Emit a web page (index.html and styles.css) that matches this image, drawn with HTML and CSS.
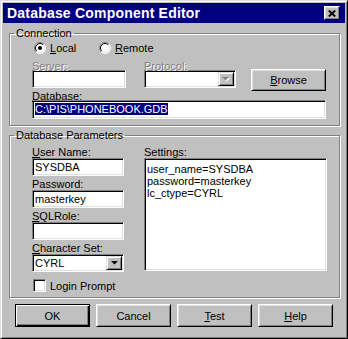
FILE: index.html
```html
<!DOCTYPE html>
<html lang="en">
<head>
    <meta charset="UTF-8">
    <title>Database Component Editor</title>
    <link rel="stylesheet" href="styles.css">
</head>
<body>

<div class="window">
    <div class="titlebar">
        <span class="title">Database Component Editor</span>
        <span class="close-btn">
            <svg width="8" height="7" viewBox="0 0 8 7"><path d="M0.8 0.5 L7.2 6.5 M7.2 0.5 L0.8 6.5" stroke="#000" stroke-width="1.9" fill="none"/></svg>
        </span>
    </div>

    <div class="content">
        <fieldset class="group conn">
            <legend>Connection</legend>
            <div class="group-body">
                <div class="radios">
                    <label class="radio local">
                        <svg class="radio-box" width="12" height="12" viewBox="0 0 12 12">
                            <circle cx="6" cy="6" r="5.5" fill="#fff"/>
                            <path d="M9.9 2.1 A5.5 5.5 0 0 0 2.1 9.9" stroke="#808080" fill="none"/>
                            <path d="M2.1 9.9 A5.5 5.5 0 0 0 9.9 2.1" stroke="#fff" fill="none"/>
                            <path d="M9.2 2.8 A4.5 4.5 0 0 0 2.8 9.2" stroke="#000" fill="none"/>
                            <path d="M2.8 9.2 A4.5 4.5 0 0 0 9.2 2.8" stroke="#dfdfdf" fill="none"/>
                            <circle cx="6" cy="6" r="2" fill="#000"/>
                        </svg>
                        <span><u>L</u>ocal</span>
                    </label>
                    <label class="radio">
                        <svg class="radio-box" width="12" height="12" viewBox="0 0 12 12">
                            <circle cx="6" cy="6" r="5.5" fill="#fff"/>
                            <path d="M9.9 2.1 A5.5 5.5 0 0 0 2.1 9.9" stroke="#808080" fill="none"/>
                            <path d="M2.1 9.9 A5.5 5.5 0 0 0 9.9 2.1" stroke="#fff" fill="none"/>
                            <path d="M9.2 2.8 A4.5 4.5 0 0 0 2.8 9.2" stroke="#000" fill="none"/>
                            <path d="M2.8 9.2 A4.5 4.5 0 0 0 9.2 2.8" stroke="#dfdfdf" fill="none"/>
                        </svg>
                        <span><u>R</u>emote</span>
                    </label>
                </div>

                <div class="row">
                    <div class="server">
                        <div class="lbl disabled">Server:</div>
                        <div class="edit"></div>
                    </div>
                    <div class="protocol">
                        <div class="lbl disabled">Protocol:</div>
                        <div class="edit combo">
                            <span class="drop">
                                <svg width="8" height="5" viewBox="0 0 8 5"><polygon points="1,1 8,1 4.5,4.5" fill="#fff"/><polygon points="0,0 7,0 3.5,3.5" fill="#808080"/></svg>
                            </span>
                        </div>
                    </div>
                    <button class="btn browse"><u>B</u>rowse</button>
                </div>

                <div class="db-field">
                    <div class="lbl"><u>D</u>atabase:</div>
                    <div class="edit db"><span class="sel">C:\PIS\PHONEBOOK.GDB</span></div>
                </div>
            </div>
        </fieldset>

        <fieldset class="group params">
            <legend>Database Parameters</legend>
            <div class="group-body">
                <div class="cols">
                    <div class="left">
                        <div class="lbl first"><u>U</u>ser Name:</div>
                        <div class="edit">SYSDBA</div>
                        <div class="lbl">Password:</div>
                        <div class="edit">masterkey</div>
                        <div class="lbl"><u>S</u>QLRole:</div>
                        <div class="edit"></div>
                        <div class="lbl"><u>C</u>haracter Set:</div>
                        <div class="edit combo">
                            <span class="combo-text">CYRL</span>
                            <span class="drop">
                                <svg width="7" height="4" viewBox="0 0 7 4"><polygon points="0,0 7,0 3.5,3.5" fill="#000"/></svg>
                            </span>
                        </div>
                        <label class="check-row">
                            <span class="check"></span>
                            <span>Login Prompt</span>
                        </label>
                    </div>
                    <div class="right">
                        <div class="lbl first">Settings:</div>
                        <div class="memo">user_name=SYSDBA<br>password=masterkey<br>lc_ctype=CYRL</div>
                    </div>
                </div>
            </div>
        </fieldset>

        <div class="buttons">
            <button class="btn default">OK</button>
            <button class="btn">Cancel</button>
            <button class="btn"><u>T</u>est</button>
            <button class="btn"><u>H</u>elp</button>
        </div>
    </div>
</div>

</body>
</html>
```

FILE: styles.css
```css
body {
    margin: 0;
    font-family: "Liberation Sans", Arial, sans-serif;
    font-size: 11px;
    color: #000;
    background: #c0c0c0;
}
.window {
    width: 348px;
    height: 339px;
    box-sizing: border-box;
    background: #c0c0c0;
    border: 1px solid;
    border-color: #dfdfdf #000 #000 #dfdfdf;
    box-shadow: inset 1px 1px #fff, inset -1px -1px #808080;
    padding: 2px;
}
.titlebar {
    height: 20px;
    background: #000080;
    color: #fff;
    display: flex;
    align-items: center;
    justify-content: space-between;
    padding: 0 5px 0 4px;
}
.title {
    font-weight: bold;
    font-size: 14px;
    letter-spacing: 0.2px;
    line-height: 20px;
}
.close-btn {
    width: 16px;
    height: 14px;
    box-sizing: border-box;
    background: #c0c0c0;
    border: 1px solid;
    border-color: #fff #000 #000 #fff;
    box-shadow: inset -1px -1px #808080, inset 1px 1px #dfdfdf;
    display: flex;
    align-items: center;
    justify-content: center;
}
.content {
    padding: 4px 0 0 6px;
}
.group {
    margin: 0;
    padding: 0;
    width: 331px;
    min-width: 0;
    box-sizing: border-box;
    border: 1px solid #808080;
    box-shadow: inset 1px 1px #fff, 1px 1px #fff;
}
.group legend {
    margin-left: 4px;
    padding: 0 2px;
    line-height: 12px;
}
.group-body {
    padding: 0 0 6px 22px;
}
.params {
    margin-top: 3px;
}
.params .group-body {
    padding-bottom: 5px;
}

/* radios */
.radios {
    display: flex;
    align-items: center;
    height: 12px;
    margin: 3px 0 0 2px;
}
.radio {
    display: flex;
    align-items: center;
    gap: 4px;
}
.radio.local {
    width: 65px;
}
.radio-box {
    display: block;
}

/* labels and fields */
.lbl {
    display: block;
    height: 8px;
    line-height: 8px;
    white-space: nowrap;
}
.lbl.disabled {
    color: #808080;
    text-shadow: 1px 1px #fff;
}
.edit {
    height: 18px;
    box-sizing: border-box;
    background: #fff;
    border: 1px solid;
    border-color: #808080 #fff #fff #808080;
    box-shadow: inset 1px 1px #000, inset -1px -1px #dfdfdf;
    padding: 1px 1px 1px 2px;
    line-height: 14px;
    white-space: nowrap;
}
.combo {
    display: flex;
    justify-content: space-between;
    padding: 1px;
}
.combo-text {
    padding-left: 1px;
}
.drop {
    width: 16px;
    height: 14px;
    box-sizing: border-box;
    background: #c0c0c0;
    border: 1px solid;
    border-color: #dfdfdf #000 #000 #dfdfdf;
    box-shadow: inset 1px 1px #fff, inset -1px -1px #808080;
    display: flex;
    align-items: center;
    justify-content: center;
    margin-left: auto;
}
.drop svg {
    display: block;
}

.row {
    display: flex;
    align-items: flex-start;
    margin-top: 8px;
}
.server {
    width: 94px;
}
.protocol {
    width: 92px;
    margin-left: 18px;
}
.db-field {
    margin-top: 1px;
}
.db {
    width: 294px;
    height: 19px;
    padding: 1px 1px 1px 2px;
    line-height: 15px;
}
.sel {
    background: #000080;
    color: #fff;
}

/* parameters */
.cols {
    display: flex;
    gap: 20px;
}
.left {
    width: 92px;
}
.right {
    width: 183px;
}
.left .lbl {
    margin-top: 4px;
}
.left .lbl.first,
.right .lbl.first {
    margin-top: 7px;
}
.left .edit,
.memo {
    margin-top: 2px;
}
.check-row {
    display: flex;
    align-items: center;
    gap: 4px;
    margin: 7px 0 0 1px;
}
.check {
    width: 13px;
    height: 13px;
    box-sizing: border-box;
    background: #fff;
    border: 1px solid;
    border-color: #808080 #fff #fff #808080;
    box-shadow: inset 1px 1px #000, inset -1px -1px #dfdfdf;
}
.memo {
    height: 113px;
    box-sizing: border-box;
    background: #fff;
    border: 1px solid;
    border-color: #808080 #fff #fff #808080;
    box-shadow: inset 1px 1px #000, inset -1px -1px #dfdfdf;
    padding: 4px 1px 0 2px;
    line-height: 12px;
}

/* buttons */
.btn {
    width: 75px;
    height: 23px;
    padding: 0;
    font: inherit;
    color: #000;
    background: #c0c0c0;
    border: 1px solid;
    border-color: #fff #000 #000 #fff;
    box-shadow: inset 1px 1px #dfdfdf, inset -1px -1px #808080;
}
.btn.default {
    border-color: #000;
    box-shadow: inset 1px 1px #fff, inset -1px -1px #000, inset -2px -2px #808080;
}
.browse {
    height: 22px;
    margin: 7px 0 0 15px;
}
.buttons {
    display: flex;
    gap: 6px;
    margin: 6px 0 0 6px;
}
```
